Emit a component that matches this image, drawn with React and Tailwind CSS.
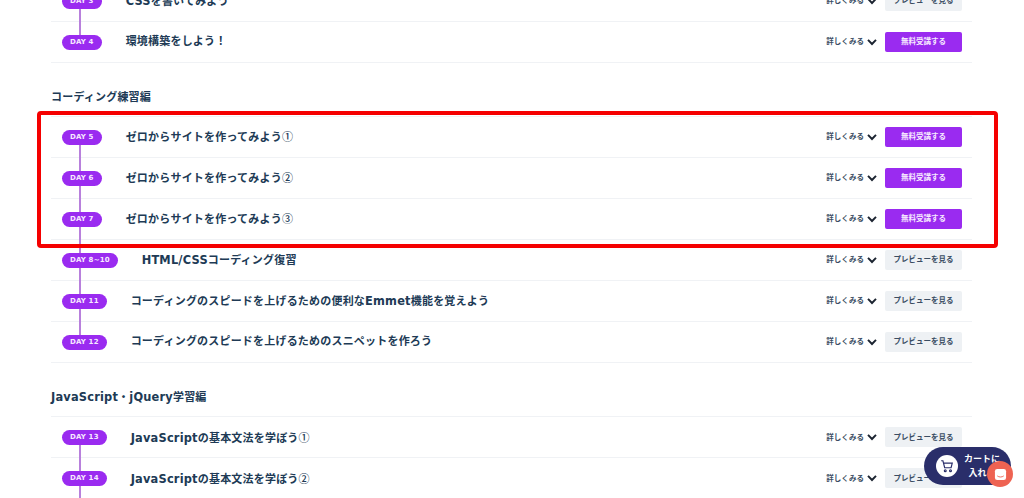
import React from "react";

const FONT = "font-['DejaVu_Sans','Noto_Sans_CJK_JP',sans-serif]";

function L({ children }) {
  return <span className="text-[11.4px]">{children}</span>;
}

function C({ children }) {
  return <span className="font-['Noto_Sans_CJK_JP',sans-serif] font-medium">{children}</span>;
}

function Row({ day, title, free, lineTop = true, lineBottom = true }) {
  return (
    <div className="relative flex h-[41px] items-center border-b border-[#f0f2f5] pl-[11px] pr-[10px]">
      {lineTop && <span className="absolute left-[28px] top-0 h-1/2 w-[2px] bg-[#b880dc]" />}
      {lineBottom && <span className="absolute left-[28px] bottom-[-1px] h-1/2 w-[2px] bg-[#b880dc]" />}
      <span className="relative z-10 flex h-[15px] shrink-0 items-center rounded-full bg-[#9a2bf0] px-[8px] text-[7px] font-bold leading-none tracking-[0.02em] text-[#f6e9ff]">
        {day}
      </span>
      <span className="ml-6 flex-1 whitespace-nowrap pt-px text-[11px] font-bold tracking-[0.018em] text-[#203a55]">
        {title}
      </span>
      <span className="text-[7.5px] font-bold text-[#3a4d63]">詳しくみる</span>
      <svg className="ml-[3px] h-[8px] w-[10px]" viewBox="0 0 10 8" fill="none" stroke="#1b2330" strokeWidth="1.9">
        <path d="M1 1.8 5 6 9 1.8" />
      </svg>
      {free ? (
        <button className="ml-2 flex h-[20px] w-[77px] items-center justify-center rounded-[2px] bg-[#9a2bf0] text-[7.5px] font-bold text-[#f6e9ff]">
          無料受講する
        </button>
      ) : (
        <button className="ml-2 flex h-[20px] w-[77px] items-center justify-center rounded-[2px] bg-[#eef1f4] text-[7.5px] font-bold text-[#3a4d63]">
          プレビューを見る
        </button>
      )}
    </div>
  );
}

function Heading({ children, className }) {
  return <h3 className={`text-[11px] font-bold leading-none tracking-[0.018em] text-[#203a55] ${className}`}>{children}</h3>;
}

export default function App() {
  return (
    <div className={`relative h-[498px] w-[1024px] overflow-hidden bg-white ${FONT}`}>
      <div className="ml-[51px] mt-[-19px] w-[921px]">
        <Row day="DAY 3" title={<><L>CSS</L>を書いてみよう</>} free={false} />
        <Row day="DAY 4" title="環境構築をしよう！" free lineBottom={false} />

        <Heading className="mt-[29px] mb-[13px]">コーディング練習編</Heading>
        <div className="border-t border-[#f0f2f5]">
          <Row day="DAY 5" title={<>ゼロからサイトを作ってみよう<C>①</C></>} free lineTop={false} />
          <Row day="DAY 6" title={<>ゼロからサイトを作ってみよう<C>②</C></>} free />
          <Row day="DAY 7" title={<>ゼロからサイトを作ってみよう<C>③</C></>} free />
          <Row day="DAY 8~10" title={<><L>HTML/CSS</L>コーディング復習</>} free={false} />
          <Row day="DAY 11" title={<>コーディングのスピードを上げるための便利な<L>Emmet</L>機能を覚えよう</>} free={false} />
          <Row day="DAY 12" title="コーディングのスピードを上げるためのスニペットを作ろう" free={false} lineBottom={false} />
        </div>

        <Heading className="mt-[29px] mb-[13px]"><L>JavaScript</L>・<L>jQuery</L>学習編</Heading>
        <div className="border-t border-[#f0f2f5]">
          <Row day="DAY 13" title={<><L>JavaScript</L>の基本文法を学ぼう<C>①</C></>} free={false} lineTop={false} />
          <Row day="DAY 14" title={<><L>JavaScript</L>の基本文法を学ぼう<C>②</C></>} free={false} />
        </div>
      </div>

      <div className="absolute left-[37px] top-[111px] z-20 h-[137px] w-[961px] rounded-[4px] border-[4px] border-[#f50000]" />

      <div className="absolute left-[924px] top-[447px] z-30 flex h-[38px] w-[87px] items-center rounded-full bg-[#2a2e6a] pl-[12px]">
        <span className="flex h-[22px] w-[22px] items-center justify-center rounded-full bg-white">
          <svg className="h-[14px] w-[14px]" viewBox="0 0 24 24" fill="none" stroke="#2a2e6a" strokeWidth="2">
            <path d="M2 3h3l3 12h11l2-8H6" />
            <circle cx="9" cy="20" r="1.6" />
            <circle cx="18" cy="20" r="1.6" />
          </svg>
        </span>
        <span className="ml-[6px] text-center text-[9px] font-bold leading-[14px] text-white">
          カートに
          <br />
          入れる
        </span>
      </div>
      <div className="absolute left-[987px] top-[461px] z-40 flex h-[26px] w-[26px] items-center justify-center rounded-full bg-[#ee6352]">
        <svg className="h-[13px] w-[13px]" viewBox="0 0 14 14">
          <rect x="1" y="1" width="12" height="12" rx="2.5" fill="#fff" />
          <path d="M3.5 8.5c2 1.6 5 1.6 7 0" fill="none" stroke="#ee6352" strokeWidth="1" />
        </svg>
      </div>
    </div>
  );
}
